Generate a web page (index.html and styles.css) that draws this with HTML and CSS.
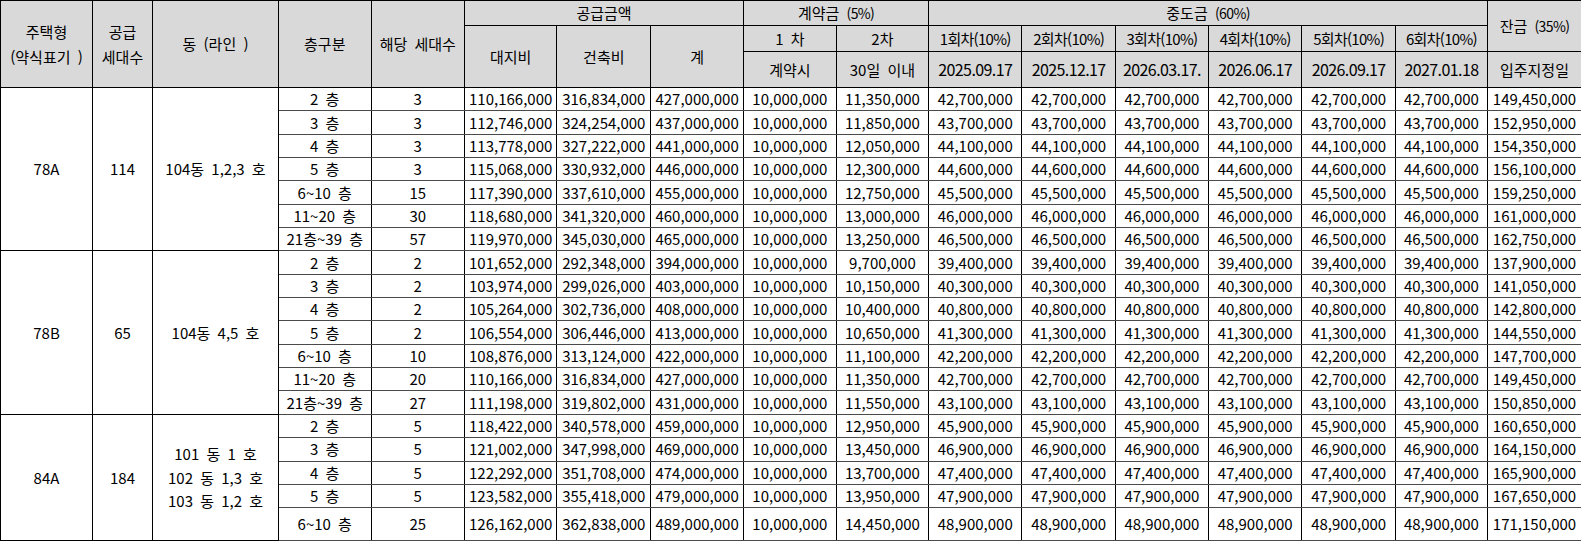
FILE: index.html
```html
<!DOCTYPE html>
<html lang="ko">
<head>
<meta charset="utf-8">
<title>공급금액 및 납부일정</title>
<link rel="stylesheet" href="styles.css">
</head>
<body>
<table class="price">
<colgroup>
<col class="c1"><col class="c2"><col class="c3">
<col class="c4"><col class="c5"><col class="c6"><col class="c7"><col class="c8">
<col class="c9"><col class="c10"><col class="c11"><col class="c12"><col class="c13">
<col class="c14"><col class="c15"><col class="c16"><col class="c17">
</colgroup>
<thead>
<tr class="h1">
<th rowspan="3" class="ml">주택형<br>(약식표기 )</th>
<th rowspan="3" class="ml">공급<br>세대수</th>
<th rowspan="3">동 (라인 )</th>
<th rowspan="3">층구분</th>
<th rowspan="3">해당 세대수</th>
<th colspan="3">공급금액</th>
<th colspan="2">계약금 <span class="pct">(5%)</span></th>
<th colspan="6">중도금 <span class="pct">(60%)</span></th>
<th rowspan="2">잔금 <span class="pct">(35%)</span></th>
</tr>
<tr class="h2">
<th rowspan="2">대지비</th>
<th rowspan="2">건축비</th>
<th rowspan="2">계</th>
<th>1 차</th>
<th>2차</th>
<th><span class="cond">1회차(10%)</span></th>
<th><span class="cond">2회차(10%)</span></th>
<th><span class="cond">3회차(10%)</span></th>
<th><span class="cond">4회차(10%)</span></th>
<th><span class="cond">5회차(10%)</span></th>
<th><span class="cond">6회차(10%)</span></th>
</tr>
<tr class="h3">
<th>계약시</th>
<th>30일 이내</th>
<th><span class="date">2025.09.17</span></th>
<th><span class="date">2025.12.17</span></th>
<th><span class="date">2026.03.17.</span></th>
<th><span class="date">2026.06.17</span></th>
<th><span class="date">2026.09.17</span></th>
<th><span class="date">2027.01.18</span></th>
<th>입주지정일</th>
</tr>
</thead>
<tbody class="grp">
<tr class="r"><td rowspan="7">78A</td><td rowspan="7">114</td><td rowspan="7">104동 1,2,3 호</td><td>2 층</td><td>3</td><td>110,166,000</td><td>316,834,000</td><td>427,000,000</td><td>10,000,000</td><td>11,350,000</td><td>42,700,000</td><td>42,700,000</td><td>42,700,000</td><td>42,700,000</td><td>42,700,000</td><td>42,700,000</td><td>149,450,000</td></tr>
<tr class="r"><td>3 층</td><td>3</td><td>112,746,000</td><td>324,254,000</td><td>437,000,000</td><td>10,000,000</td><td>11,850,000</td><td>43,700,000</td><td>43,700,000</td><td>43,700,000</td><td>43,700,000</td><td>43,700,000</td><td>43,700,000</td><td>152,950,000</td></tr>
<tr class="r"><td>4 층</td><td>3</td><td>113,778,000</td><td>327,222,000</td><td>441,000,000</td><td>10,000,000</td><td>12,050,000</td><td>44,100,000</td><td>44,100,000</td><td>44,100,000</td><td>44,100,000</td><td>44,100,000</td><td>44,100,000</td><td>154,350,000</td></tr>
<tr class="r"><td>5 층</td><td>3</td><td>115,068,000</td><td>330,932,000</td><td>446,000,000</td><td>10,000,000</td><td>12,300,000</td><td>44,600,000</td><td>44,600,000</td><td>44,600,000</td><td>44,600,000</td><td>44,600,000</td><td>44,600,000</td><td>156,100,000</td></tr>
<tr class="r"><td>6~10 층</td><td>15</td><td>117,390,000</td><td>337,610,000</td><td>455,000,000</td><td>10,000,000</td><td>12,750,000</td><td>45,500,000</td><td>45,500,000</td><td>45,500,000</td><td>45,500,000</td><td>45,500,000</td><td>45,500,000</td><td>159,250,000</td></tr>
<tr class="r"><td>11~20 층</td><td>30</td><td>118,680,000</td><td>341,320,000</td><td>460,000,000</td><td>10,000,000</td><td>13,000,000</td><td>46,000,000</td><td>46,000,000</td><td>46,000,000</td><td>46,000,000</td><td>46,000,000</td><td>46,000,000</td><td>161,000,000</td></tr>
<tr class="r"><td>21층~39 층</td><td>57</td><td>119,970,000</td><td>345,030,000</td><td>465,000,000</td><td>10,000,000</td><td>13,250,000</td><td>46,500,000</td><td>46,500,000</td><td>46,500,000</td><td>46,500,000</td><td>46,500,000</td><td>46,500,000</td><td>162,750,000</td></tr>
</tbody>
<tbody class="grp">
<tr class="r"><td rowspan="7">78B</td><td rowspan="7">65</td><td rowspan="7">104동 4,5 호</td><td>2 층</td><td>2</td><td>101,652,000</td><td>292,348,000</td><td>394,000,000</td><td>10,000,000</td><td>9,700,000</td><td>39,400,000</td><td>39,400,000</td><td>39,400,000</td><td>39,400,000</td><td>39,400,000</td><td>39,400,000</td><td>137,900,000</td></tr>
<tr class="r"><td>3 층</td><td>2</td><td>103,974,000</td><td>299,026,000</td><td>403,000,000</td><td>10,000,000</td><td>10,150,000</td><td>40,300,000</td><td>40,300,000</td><td>40,300,000</td><td>40,300,000</td><td>40,300,000</td><td>40,300,000</td><td>141,050,000</td></tr>
<tr class="r"><td>4 층</td><td>2</td><td>105,264,000</td><td>302,736,000</td><td>408,000,000</td><td>10,000,000</td><td>10,400,000</td><td>40,800,000</td><td>40,800,000</td><td>40,800,000</td><td>40,800,000</td><td>40,800,000</td><td>40,800,000</td><td>142,800,000</td></tr>
<tr class="r"><td>5 층</td><td>2</td><td>106,554,000</td><td>306,446,000</td><td>413,000,000</td><td>10,000,000</td><td>10,650,000</td><td>41,300,000</td><td>41,300,000</td><td>41,300,000</td><td>41,300,000</td><td>41,300,000</td><td>41,300,000</td><td>144,550,000</td></tr>
<tr class="r"><td>6~10 층</td><td>10</td><td>108,876,000</td><td>313,124,000</td><td>422,000,000</td><td>10,000,000</td><td>11,100,000</td><td>42,200,000</td><td>42,200,000</td><td>42,200,000</td><td>42,200,000</td><td>42,200,000</td><td>42,200,000</td><td>147,700,000</td></tr>
<tr class="r"><td>11~20 층</td><td>20</td><td>110,166,000</td><td>316,834,000</td><td>427,000,000</td><td>10,000,000</td><td>11,350,000</td><td>42,700,000</td><td>42,700,000</td><td>42,700,000</td><td>42,700,000</td><td>42,700,000</td><td>42,700,000</td><td>149,450,000</td></tr>
<tr class="r"><td>21층~39 층</td><td>27</td><td>111,198,000</td><td>319,802,000</td><td>431,000,000</td><td>10,000,000</td><td>11,550,000</td><td>43,100,000</td><td>43,100,000</td><td>43,100,000</td><td>43,100,000</td><td>43,100,000</td><td>43,100,000</td><td>150,850,000</td></tr>
</tbody>
<tbody class="grp">
<tr class="r"><td rowspan="5">84A</td><td rowspan="5">184</td><td rowspan="5" class="dong3">101 동 1 호<br>102 동 1,3 호<br>103 동 1,2 호</td><td>2 층</td><td>5</td><td>118,422,000</td><td>340,578,000</td><td>459,000,000</td><td>10,000,000</td><td>12,950,000</td><td>45,900,000</td><td>45,900,000</td><td>45,900,000</td><td>45,900,000</td><td>45,900,000</td><td>45,900,000</td><td>160,650,000</td></tr>
<tr class="r"><td>3 층</td><td>5</td><td>121,002,000</td><td>347,998,000</td><td>469,000,000</td><td>10,000,000</td><td>13,450,000</td><td>46,900,000</td><td>46,900,000</td><td>46,900,000</td><td>46,900,000</td><td>46,900,000</td><td>46,900,000</td><td>164,150,000</td></tr>
<tr class="r"><td>4 층</td><td>5</td><td>122,292,000</td><td>351,708,000</td><td>474,000,000</td><td>10,000,000</td><td>13,700,000</td><td>47,400,000</td><td>47,400,000</td><td>47,400,000</td><td>47,400,000</td><td>47,400,000</td><td>47,400,000</td><td>165,900,000</td></tr>
<tr class="r"><td>5 층</td><td>5</td><td>123,582,000</td><td>355,418,000</td><td>479,000,000</td><td>10,000,000</td><td>13,950,000</td><td>47,900,000</td><td>47,900,000</td><td>47,900,000</td><td>47,900,000</td><td>47,900,000</td><td>47,900,000</td><td>167,650,000</td></tr>
<tr class="r last"><td>6~10 층</td><td>25</td><td>126,162,000</td><td>362,838,000</td><td>489,000,000</td><td>10,000,000</td><td>14,450,000</td><td>48,900,000</td><td>48,900,000</td><td>48,900,000</td><td>48,900,000</td><td>48,900,000</td><td>48,900,000</td><td>171,150,000</td></tr>
</tbody>
</table>
</body>
</html>
```

FILE: styles.css
```css
html, body {
  margin: 0;
  padding: 0;
  background: #ffffff;
}

body {
  font-family: "Noto Sans CJK KR", "Noto Sans", sans-serif;
  font-size: 15px;
  color: #000000;
}

.price {
  border-collapse: collapse;
  table-layout: fixed;
  width: 1581px;
}

.c1 { width: 92px; }
.c2 { width: 60px; }
.c3 { width: 126px; }
.c4 { width: 92.5px; }
.c5 { width: 93.5px; }
.c6 { width: 92.4px; }
.c7 { width: 93.8px; }
.c8 { width: 92.8px; }
.c9 { width: 92.7px; }
.c10 { width: 92.5px; }
.c11 { width: 93.2px; }
.c12 { width: 93.6px; }
.c13 { width: 93px; }
.c14 { width: 93.4px; }
.c15 { width: 93.6px; }
.c16 { width: 92px; }
.c17 { width: 94px; }

.price th,
.price td {
  border: 1px solid #000000;
  padding: 0;
  text-align: center;
  vertical-align: middle;
  white-space: nowrap;
  overflow: hidden;
  line-height: 20px;
  word-spacing: 3px;
}

.price th {
  background: #d9d9d9;
  font-weight: normal;
}

.price th.ml {
  line-height: 25px;
}

.h1 { height: 25px; }
.h2 { height: 26px; }
.h3 { height: 36px; }

.r { height: 23.35px; }
.r.last { height: 33px; }

.price tbody.grp tr.r td {
  border-top-color: #4a4a4a;
  border-bottom-color: #4a4a4a;
}

.price tbody.grp tr.r:first-child td {
  border-top-color: #000000;
}

.price tbody.grp tr.r:first-child td[rowspan] {
  border-bottom-color: #000000;
}

.price td.dong3 {
  line-height: 23.5px;
}

.pct {
  font-size: 14px;
  letter-spacing: -0.6px;
  word-spacing: 0;
}

.cond {
  letter-spacing: -0.7px;
}

.date {
  font-size: 16px;
  letter-spacing: -0.6px;
}
```
